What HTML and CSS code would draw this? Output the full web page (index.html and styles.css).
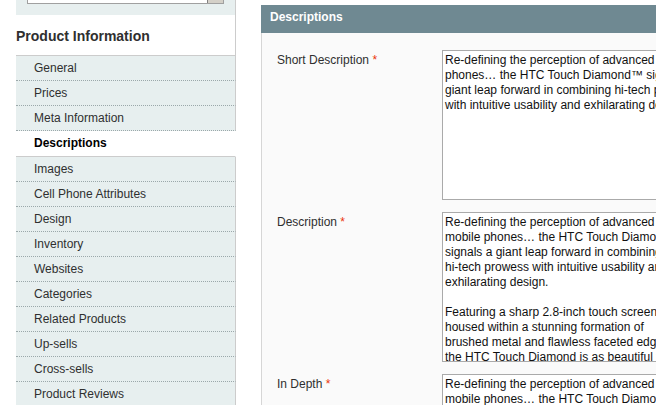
FILE: index.html
```html
<!DOCTYPE html>
<html lang="en">
<head>
    <meta charset="UTF-8">
    <title>Manage Products - Descriptions</title>
    <link rel="stylesheet" href="styles.css">
</head>
<body>
    <div class="page">
        <div class="side-col">
            <div class="switcher">
                <div class="switcher-select"><span class="switcher-btn"></span></div>
            </div>
            <h3 class="side-title">Product Information</h3>
            <ul class="tabs">
                <li>General</li>
                <li>Prices</li>
                <li>Meta Information</li>
                <li class="active">Descriptions</li>
                <li>Images</li>
                <li>Cell Phone Attributes</li>
                <li>Design</li>
                <li>Inventory</li>
                <li>Websites</li>
                <li>Categories</li>
                <li>Related Products</li>
                <li>Up-sells</li>
                <li>Cross-sells</li>
                <li>Product Reviews</li>
            </ul>
        </div>

        <div class="main-col">
            <div class="entry-edit">
                <div class="entry-head">
                    <h4>Descriptions</h4>
                </div>
                <div class="fieldset">
                    <div class="form-row">
                        <label for="short_description">Short Description <span class="required">*</span></label>
                        <textarea id="short_description" class="short" name="short_description">Re-defining the perception of advanced mobile phones… the HTC Touch Diamond™ signals a giant leap forward in combining hi-&#8288;tech prowess with intuitive usability and exhilarating design.</textarea>
                    </div>
                    <div class="form-row">
                        <label for="description">Description <span class="required">*</span></label>
                        <textarea id="description" name="description">Re-defining the perception of advanced mobile phones… the HTC Touch Diamond™ signals a giant leap forward in combining hi-&#8288;tech prowess with intuitive usability and exhilarating design.

Featuring a sharp 2.8-inch touch screen housed within a stunning formation of brushed metal and flawless faceted edges, the HTC Touch Diamond is as beautiful to behold as it is to use.</textarea>
                    </div>
                    <div class="form-row">
                        <label for="in_depth">In Depth <span class="required">*</span></label>
                        <textarea id="in_depth" name="in_depth">Re-defining the perception of advanced mobile phones… the HTC Touch Diamond™ signals a giant leap forward in combining hi-&#8288;tech prowess with intuitive usability and exhilarating design.

Featuring a sharp 2.8-inch touch screen housed within a stunning formation of brushed metal and flawless faceted edges, the HTC Touch Diamond is as beautiful to behold as it is to use.</textarea>
                    </div>
                </div>
            </div>
        </div>
    </div>
</body>
</html>
```

FILE: styles.css
```css
html, body {
    overflow: hidden;
}
body {
    margin: 0;
    padding: 0;
    background: #fff;
    color: #2f2f2f;
    font-family: "Liberation Sans", Arial, sans-serif;
    font-size: 12px;
}
.page {
    display: flex;
    align-items: flex-start;
    padding-left: 16px;
}
.side-col {
    flex: 0 0 220px;
    width: 220px;
}
.switcher {
    height: 15px;
    padding: 0 11px;
    background: #e7efef;
    border-right: 1px solid #ccc;
}
.switcher-select {
    display: flex;
    justify-content: flex-end;
    height: 3px;
    background: #fff;
    border: 1px solid #a0a0a0;
    border-top: none;
}
.switcher-btn {
    width: 15px;
    background: #d4d0c8;
    border-left: 1px solid #808080;
}
.side-title {
    margin: 0;
    padding: 13px 0 10px;
    font-size: 14px;
    line-height: 17px;
    font-weight: bold;
    color: #2f2f2f;
    border-right: 1px solid #ccc;
}
.tabs {
    list-style: none;
    margin: 0;
    padding: 0;
    border-top: 1px solid #ccc;
}
.tabs li {
    height: 24px;
    line-height: 25px;
    padding-left: 18px;
    background: #e7efef;
    border-right: 1px solid #ccc;
    border-bottom: 1px dotted #9ba8aa;
    white-space: nowrap;
}
.tabs li.active {
    height: 25px;
    background: #fff;
    border-right-color: #fff;
    border-bottom: 1px solid #ccc;
    font-weight: bold;
    color: #000;
}
.main-col {
    flex: 1;
    min-width: 0;
    margin-left: 25px;
    padding-top: 5px;
}
.entry-head {
    height: 28px;
    padding: 3px 9px 0;
    box-sizing: border-box;
    background: #6f8992;
}
.entry-head h4 {
    margin: 0;
    font-size: 12px;
    line-height: 18px;
    font-weight: bold;
    color: #fff;
}
.fieldset {
    padding: 17px 0 0 15px;
    background: #fafafa;
    border-left: 1px solid #d6d6d6;
}
.form-row {
    display: flex;
    align-items: flex-start;
    margin-bottom: 12px;
}
.form-row label {
    flex: 0 0 165px;
    padding-top: 3px;
    line-height: 15px;
}
.required {
    color: #eb340a;
}
textarea {
    flex: 0 0 248px;
    width: 248px;
    height: 150px;
    box-sizing: border-box;
    margin: 0;
    padding: 2px;
    border: 1px solid #aaa;
    background: #fff;
    color: #111;
    font-family: "Liberation Sans", Arial, sans-serif;
    font-size: 12px;
    line-height: 15px;
    overflow: hidden;
    resize: none;
}
textarea.short {
    flex-basis: 270px;
    width: 270px;
}
```
